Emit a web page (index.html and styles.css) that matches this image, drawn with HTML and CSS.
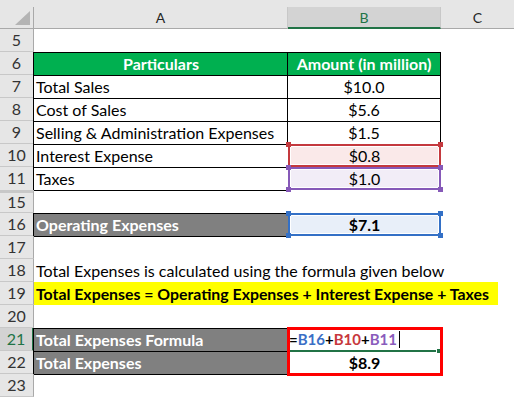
FILE: index.html
```html
<!DOCTYPE html>
<html>
<head>
<meta charset="utf-8">
<link rel="stylesheet" href="styles.css">
</head>
<body>
<div class="sheet">
  <div class="ch corner"><span><svg width="33" height="22" viewBox="0 0 33 22"><polygon points="15,18 30,18 30,4" fill="#b4b4b4"/></svg></span></div>
  <div class="ch"><span>A</span></div>
  <div class="ch sel"><span>B</span></div>
  <div class="ch last"><span>C</span></div>

  <div class="rh">5</div><div class="c"></div><div class="c"></div><div class="c"></div>

  <div class="rh">6</div><div class="c bd hd">Particulars</div><div class="c bd br hd">Amount (in million)</div><div class="c"></div>

  <div class="rh">7</div><div class="c bd">Total Sales</div><div class="c bd br ctr">$10.0</div><div class="c"></div>

  <div class="rh">8</div><div class="c bd">Cost of Sales</div><div class="c bd br ctr">$5.6</div><div class="c"></div>

  <div class="rh">9</div><div class="c bd">Selling &amp; Administration Expenses</div><div class="c bd br ctr">$1.5</div><div class="c"></div>

  <div class="rh">10</div><div class="c bd">Interest Expense</div><div class="c rng red ctr">$0.8<i class="h tl"></i><i class="h tr"></i></div><div class="c"></div>

  <div class="rh hid-above">11</div><div class="c bd">Taxes</div><div class="c rng pur ctr">$1.0<i class="h tl"></i><i class="h tr"></i><i class="h bl"></i><i class="h bbr"></i></div><div class="c"></div>

  <div class="rh hid">15</div><div class="c bt"></div><div class="c"></div><div class="c"></div>

  <div class="rh">16</div><div class="c bd gray">Operating Expenses</div><div class="c rng blu ctr bold">$7.1<i class="h tl"></i><i class="h tr"></i><i class="h bl"></i><i class="h bbr"></i></div><div class="c"></div>

  <div class="rh">17</div><div class="c bt"></div><div class="c"></div><div class="c"></div>

  <div class="rh">18</div><div class="c span3">Total Expenses is calculated using the formula given below</div>

  <div class="rh">19</div><div class="c span3 yellow">Total Expenses = Operating Expenses + Interest Expense + Taxes</div>

  <div class="rh">20</div><div class="c"></div><div class="c"></div><div class="c"></div>

  <div class="rh act">21</div><div class="c bd gray">Total Expenses Formula</div><div class="c formula"><span class="k">=</span><span class="f-blu">B16</span><span class="k">+</span><span class="f-red">B10</span><span class="k">+</span><span class="f-pur">B11</span><span class="caret"></span><span class="active-line"></span><span class="fill-handle"></span><span class="redbox"></span></div><div class="c"></div>

  <div class="rh">22</div><div class="c bd gray">Total Expenses</div><div class="c ctr bold">$8.9</div><div class="c"></div>

  <div class="rh">23</div><div class="c bt"></div><div class="c"></div><div class="c"></div>
</div>
</body>
</html>
```

FILE: styles.css
```css
html, body {
  margin: 0;
  padding: 0;
  background: #ffffff;
  overflow: hidden;
}

body {
  font-family: "Lato", "Liberation Sans", sans-serif;
  color: #000;
}

.sheet {
  display: grid;
  grid-template-columns: 34px 254px 153px 1fr;
  grid-template-rows: 29px;
  grid-auto-rows: 23px;
  width: 514px;
}

/* column headers */
.ch {
  background: #e6e6e6;
  padding-top: 7px;
  box-sizing: border-box;
}

.ch span {
  display: block;
  height: 22px;
  box-sizing: border-box;
  border-right: 1px solid #c8c8c8;
  border-bottom: 1px solid #a9a9a9;
  text-align: center;
  font-size: 14px;
  line-height: 21px;
  color: #262626;
}

.ch.corner span {
  border-right: 1px solid #a9a9a9;
  line-height: 0;
}

.ch.last span {
  border-right: 0;
}

.ch.sel span {
  background: #d3d3d3;
  border-bottom: 2px solid #217346;
  color: #217346;
}

/* row headers */
.rh {
  background: #e6e6e6;
  box-sizing: border-box;
  border-right: 1px solid #a9a9a9;
  border-bottom: 1px solid #c8c8c8;
  text-align: center;
  font-size: 16px;
  line-height: 22px;
  color: #333;
}

.rh.hid-above {
  border-bottom: 0;
}

.rh.hid {
  border-top: 2px solid #c8c8c8;
  box-shadow: inset 0 1px 0 #c8c8c8;
  background-clip: padding-box;
  line-height: 20px;
}

.rh.act {
  background: #d3d3d3;
  color: #217346;
  border-right: 2px solid #217346;
}

/* cells */
.c {
  box-sizing: border-box;
  border-top: 1px solid transparent;
  padding: 0 2px;
  font-size: 16px;
  line-height: 21px;
  white-space: nowrap;
  min-width: 0;
}

.bd {
  border-top-color: #000;
  border-left: 1px solid #000;
  margin-left: -1px;
}

.br {
  border-right: 1px solid #000;
}

.bt {
  border-top-color: #000;
}

.ctr {
  text-align: center;
}

.bold {
  font-weight: 700;
}

.hd {
  background: #00b050;
  color: #fff;
  font-weight: 700;
  text-align: center;
}

.gray {
  background: #808080;
  color: #fff;
  font-weight: 700;
}

.span3 {
  grid-column: span 3;
}

.yellow {
  background: #ffff00;
  font-weight: 700;
  font-size: 15.85px;
  margin-right: 16px;
}

/* reference range highlights */
.rng {
  position: relative;
  border-top: 0;
  padding-top: 1px;
}

.rng.red {
  background: #fae9e9;
  box-shadow: inset 0 0 0 2px #c4393e, inset 0 0 0 3px #fff;
}

.rng.pur {
  background: #f2edf7;
  box-shadow: inset 0 0 0 2px #8659b8, inset 0 0 0 3px #fff;
}

.rng.blu {
  background: #e8eff9;
  box-shadow: inset 0 0 0 2px #3370c6, inset 0 0 0 3px #fff;
}

.h {
  position: absolute;
  width: 5px;
  height: 5px;
}

.red .h { background: #c4393e; }
.pur .h { background: #8659b8; }
.blu .h { background: #3370c6; }

.h.tl { top: -2px; left: -2px; }
.h.tr { top: -2px; right: -2px; }
.h.bl { bottom: -2px; left: -2px; }
.h.bbr { bottom: -2px; right: -2px; }

/* formula cell */
.formula {
  position: relative;
  font-weight: 700;
  font-size: 15px;
  padding-left: 1px;
}

.k { color: #000; }
.f-blu { color: #3a6fc6; }
.f-red { color: #c7383d; }
.f-pur { color: #8a5cbc; }

.caret {
  display: inline-block;
  width: 1px;
  height: 17px;
  background: #000;
  margin-left: 2px;
  vertical-align: -3px;
}

.active-line {
  position: absolute;
  left: 0;
  right: 0;
  bottom: -1px;
  height: 2px;
  background: #217346;
}

.fill-handle {
  position: absolute;
  right: -1px;
  bottom: -3px;
  width: 4px;
  height: 4px;
  background: #217346;
  border: 1px solid #fff;
}

.redbox {
  position: absolute;
  left: -1px;
  right: -2px;
  top: -2px;
  height: 49px;
  box-sizing: border-box;
  border: 3px solid #ff0000;
  z-index: 2;
}
```
